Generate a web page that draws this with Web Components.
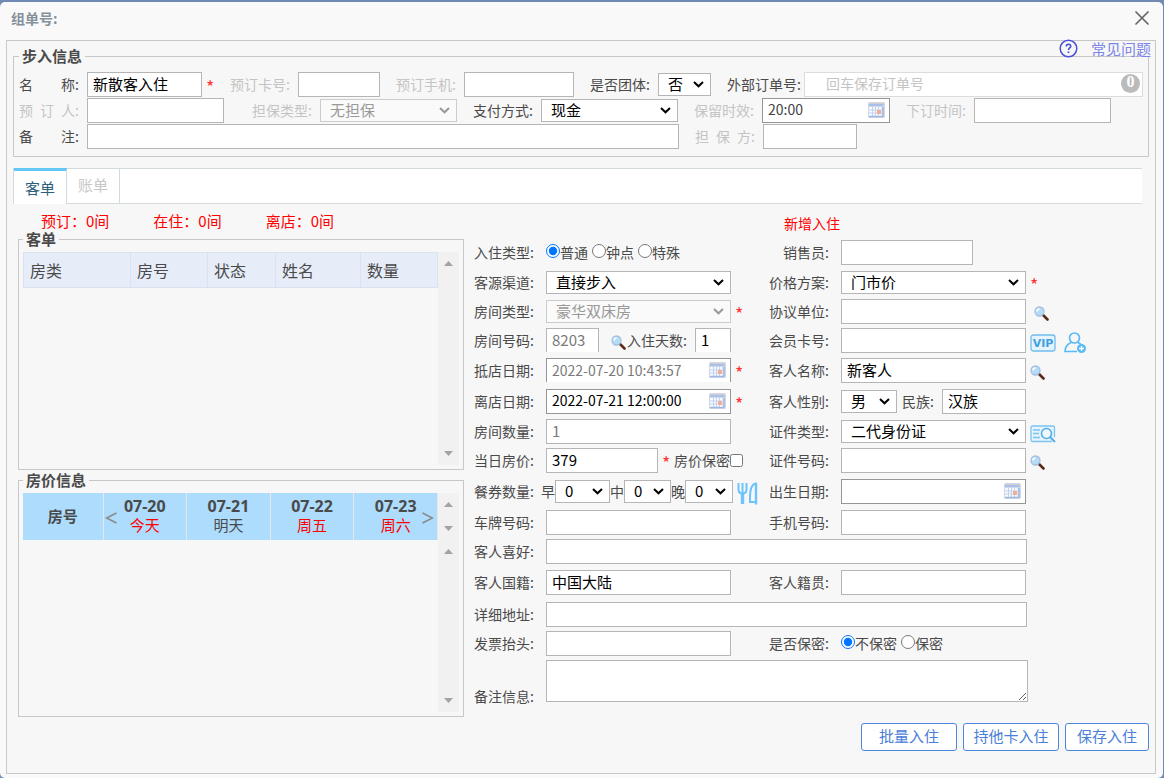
<!DOCTYPE html>
<html lang="zh-CN">
<head>
<meta charset="UTF-8">
<meta name="viewport" content="width=device-width, initial-scale=1.0">
<title>组单号</title>
<style>
    * {
        box-sizing: border-box;
    }

    body {
        margin: 0;
        padding: 2px 1px 0 0;
        min-height: 100vh;
        display: flex;
        background: #7189b5;
        color: #4a4a4a;
        font: 14px/20px "Noto Sans CJK SC", sans-serif;
    }

    checkin-dialog {
        flex: 1;
    }

    .row {
        display: flex;
        align-items: center;
        gap: 16px;
        height: 26px;
    }

    .row > .first {
        margin-right: 12px;
    }

    .grow {
        flex: 1;
    }

    .main {
        display: grid;
        grid-template-columns: 446px 1fr;
        column-gap: 10px;
        padding-left: 5px;
    }

    .status {
        display: flex;
        gap: 44px;
        margin: 9px 0 0 23px;
        font-size: 15px;
        line-height: 16px;
        color: #f00;
    }

    .split {
        display: flex;
    }

    .orders {
        height: 213px;
    }

    .form {
        display: grid;
        grid-template-columns: 295px 1fr;
        grid-template-rows: 33px 30px 30px 28px 30px 30px 32px 28px 30px 32px 30px 28px 34px 30px 28px 48px;
        align-items: center;
        --label-width: 72px;
        --label-gap: 12px;
    }

    .form .title {
        grid-column: 2;
        padding: 5px 0 0 15px;
        color: #f00;
    }

    .cell {
        display: flex;
        align-items: center;
        gap: 4px;
    }

    .roomy {
        gap: 8px;
    }

    .tight {
        gap: 0;
        --label-width: 14px;
        --label-gap: 0px;
    }

    .wide {
        grid-column: 1 / 3;
    }

    .actions {
        display: flex;
        justify-content: flex-end;
        gap: 6px;
        margin-top: 6px;
    }
</style>
</head>
<body>

<checkin-dialog heading="组单号:">
    <group-box heading="步入信息" class="walkin">
        <div class="row">
            <form-field class="first" spread label="名 称" width="115" value="新散客入住" required></form-field>
            <form-field label="预订卡号" width="82" muted></form-field>
            <form-field label="预订手机" width="110" muted></form-field>
            <form-field label="是否团体" type="select" width="53" value="否"></form-field>
            <form-field class="grow" label="外部订单号" width="auto" placeholder="回车保存订单号" badge="0"></form-field>
        </div>
        <div class="row">
            <form-field class="first" spread label="预 订 人" width="137" muted></form-field>
            <form-field label="担保类型" type="select" width="137" value="无担保" muted disabled></form-field>
            <form-field label="支付方式" type="select" width="137" value="现金"></form-field>
            <form-field label="保留时效" type="date" width="128" value="20:00" muted></form-field>
            <form-field label="下订时间" width="137" muted></form-field>
        </div>
        <div class="row">
            <form-field spread label="备 注" width="592"></form-field>
            <form-field spread label="担 保 方" width="94" muted></form-field>
        </div>
    </group-box>

    <tab-strip tabs="客单,账单"></tab-strip>

    <div class="main">
        <div class="left">
            <div class="status">
                <span>预订：0间</span>
                <span>在住：0间</span>
                <span>离店：0间</span>
            </div>
            <group-box heading="客单" class="box">
                <div class="split orders">
                    <order-table class="grow"></order-table>
                    <scroll-rail height="213"></scroll-rail>
                </div>
            </group-box>
            <group-box heading="房价信息" class="box">
                <div class="split">
                    <price-calendar class="grow"></price-calendar>
                    <div>
                        <scroll-rail height="47"></scroll-rail>
                        <scroll-rail height="172"></scroll-rail>
                    </div>
                </div>
            </group-box>
        </div>

        <div class="form">
            <div class="title">新增入住</div>

            <radio-field label="入住类型" name="type" options="普通,钟点,特殊"></radio-field>
            <form-field label="销售员" width="132"></form-field>

            <form-field label="客源渠道" type="select" width="185" value="直接步入"></form-field>
            <form-field label="价格方案" type="select" width="185" value="门市价" required></form-field>

            <form-field label="房间类型" type="select" width="185" value="豪华双床房" disabled required></form-field>
            <div class="cell roomy">
                <form-field label="协议单位" width="185"></form-field>
                <icon-button name="search" title="查找协议单位"></icon-button>
            </div>

            <div class="cell" style="gap: 0">
                <form-field label="房间号码" width="53" value="8203" readonly cut></form-field>
                <icon-button name="search" title="查找房间" style="margin-left: 12px"></icon-button>
                <form-field label="入住天数" width="36" value="1" cut style="--label-width: 69px; --label-gap: 8px"></form-field>
            </div>
            <div class="cell">
                <form-field label="会员卡号" width="185"></form-field>
                <icon-button name="vip" title="会员"></icon-button>
                <icon-button name="member" title="新增会员" style="margin-left: 4px"></icon-button>
            </div>

            <form-field label="抵店日期" type="date" width="185" value="2022-07-20 10:43:57" readonly cut required></form-field>
            <div class="cell">
                <form-field label="客人名称" width="185" value="新客人"></form-field>
                <icon-button name="search" title="查找客人"></icon-button>
            </div>

            <form-field label="离店日期" type="date" width="185" value="2022-07-21 12:00:00" required></form-field>
            <div class="cell">
                <form-field label="客人性别" type="select" width="56" value="男"></form-field>
                <form-field label="民族" width="84" value="汉族" style="--label-width: 41px; --label-gap: 8px"></form-field>
            </div>

            <form-field label="房间数量" width="185" value="1" readonly></form-field>
            <div class="cell">
                <form-field label="证件类型" type="select" width="185" value="二代身份证"></form-field>
                <icon-button name="card" title="读取证件"></icon-button>
            </div>

            <div class="cell">
                <form-field label="当日房价" width="112" value="379" required></form-field>
                <check-field label="房价保密"></check-field>
            </div>
            <div class="cell">
                <form-field label="证件号码" width="185"></form-field>
                <icon-button name="search" title="查找证件"></icon-button>
            </div>

            <div class="cell tight">
                <form-field label="餐券数量" type="none" style="--label-width: 67px; --label-gap: 7px"></form-field>
                <form-field label="早" bare type="select" width="55" value="0"></form-field>
                <form-field label="中" bare type="select" width="47" value="0"></form-field>
                <form-field label="晚" bare type="select" width="48" value="0"></form-field>
                <icon-button name="meal" title="餐券" style="margin-left: 4px"></icon-button>
            </div>
            <form-field label="出生日期" type="date" width="185"></form-field>

            <form-field label="车牌号码" width="185"></form-field>
            <form-field label="手机号码" width="185"></form-field>

            <form-field class="wide" label="客人喜好" width="481"></form-field>

            <form-field label="客人国籍" width="185" value="中国大陆"></form-field>
            <form-field label="客人籍贯" width="185"></form-field>

            <form-field class="wide" label="详细地址" width="481"></form-field>

            <form-field label="发票抬头" width="185"></form-field>
            <radio-field label="是否保密" name="secret" options="不保密,保密"></radio-field>

            <form-field class="wide" label="备注信息" type="area" width="482"></form-field>
        </div>
    </div>

    <div class="actions">
        <action-button width="96">批量入住</action-button>
        <action-button width="96">持他卡入住</action-button>
        <action-button width="84">保存入住</action-button>
    </div>
</checkin-dialog>

<script>
const BASE = `
    * {
        box-sizing: border-box;
    }
    button, input, select, textarea {
        font-family: inherit;
        margin: 0;
    }
    button {
        padding: 0;
        border: none;
        background: none;
        cursor: pointer;
    }
`;

const CALENDAR = `
    <svg width="17" height="16" viewBox="0 0 17 16">
        <rect width="17" height="16" rx="1.500" fill="#cfd8ea"/>
        <path d="M1 1.500h14.500" stroke="#d9cdc8"/>
        <path d="M1 3h14.500" stroke="#a9c0ea" stroke-width="2"/>
        <path d="M1 5h12.500v9H1z" fill="#f6f9fe"/>
        <path d="M1 8h12.500M1 11h12.500M4.500 5v9M7.500 5v9M10.500 5v9" stroke="#c3d3ee"/>
        <path d="M9 8h4v4H9z" fill="#f4ad94"/>
        <path d="M15 5v9.500M1 14.500h14" stroke="#a3b8de" stroke-width="1.500"/>
    </svg>`;

const CHEVRON = `
    <svg class="chevron" width="11" height="7" viewBox="0 0 11 7">
        <path d="M1 1l4.500 4.300L10 1" fill="none" stroke="currentColor" stroke-width="2"/>
    </svg>`;

const ICONS = {
    search: `
        <svg width="15" height="15" viewBox="0 0 15 15">
            <path d="M9 9l4.500 4.500" stroke="#5b2a1c" stroke-width="2.600" stroke-linecap="round"/>
            <circle cx="5.500" cy="5.500" r="4.500" fill="#b5dbf7" stroke="#a3bfe0" stroke-width="1.300"/>
            <path d="M3 5.500a2.600 2.600 0 0 1 2.500-2.500" fill="none" stroke="#fff" stroke-width="1.500"/>
        </svg>`,
    vip: `
        <svg width="26" height="18" viewBox="0 0 26 18">
            <rect x="1" y="1" width="24" height="16" rx="2.500" fill="#e4f3fd" stroke="#6fbdee" stroke-width="1.300"/>
            <text x="13" y="13" text-anchor="middle" font-family="DejaVu Sans" font-weight="700" font-size="11" fill="#3f9fde">VIP</text>
        </svg>`,
    member: `
        <svg width="23" height="22" viewBox="0 0 23 22" fill="none" stroke="#59baf5" stroke-width="1.700">
            <circle cx="10.500" cy="6" r="5"/>
            <path d="M7 10.500C3 12.500 1 15 1 19.500h12M14 10.500c2 1 3 1.800 3.800 3"/>
            <circle cx="17.500" cy="16.500" r="4.500" fill="#59baf5" stroke="none"/>
            <path d="M17.500 14v5M15 16.500h5" stroke="#fff" stroke-width="1.300"/>
        </svg>`,
    card: `
        <svg width="26" height="18" viewBox="0 0 26 18" fill="none" stroke="#7cc3ee" stroke-width="1.300">
            <path d="M24.500 12V2.500Q24.500 1 23 1H2.500Q1 1 1 2.500v12Q1 16.500 2.500 16.500H22" fill="#e4f3fd"/>
            <path d="M3 5h7M3 8.500h6M3 12.500h7"/>
            <circle cx="16.500" cy="8.500" r="5" fill="#eef8ff" stroke="#56aee4" stroke-width="1.600"/>
            <path d="M20 12l5 5" stroke="#56aee4" stroke-width="2"/>
        </svg>`,
    meal: `
        <svg width="21" height="23" viewBox="0 0 21 23" fill="none" stroke="#6cc4fa" stroke-width="2">
            <path d="M1.500 1v6.500q0 4 4 4t4-4V1M5.500 1v21"/>
            <path d="M5.500 11v11" stroke-width="3.400"/>
            <path d="M19 22V1.500C14.500 2 13 8 13 15.500V20h5.500"/>
            <path d="M19 2v20.500" stroke-width="2.400"/>
        </svg>`
};

class CheckinDialog extends HTMLElement {

    constructor() {
        super();
        this.attachShadow({ mode: 'open' });
    }

    connectedCallback() {
        this.shadowRoot.innerHTML = `
            <style>
                ${BASE}
                :host {
                    display: flex;
                    flex-direction: column;
                    padding: 0 7px 4px 6px;
                    border-radius: 5px;
                    background: #f9f9f9;
                }
                header {
                    display: flex;
                    align-items: center;
                    justify-content: space-between;
                    height: 32px;
                    padding: 0 7px 0 5px;
                    margin-bottom: 6px;
                }
                h1 {
                    margin: 0;
                    font-size: 14px;
                    font-weight: 700;
                    color: #84909a;
                }
                header svg {
                    display: block;
                }
                .panel {
                    position: relative;
                    flex: 1;
                    padding: 5px 6px 21px;
                    border: 1px solid #c8c8c8;
                    background: #f7f7f7;
                }
                /* sits over the top edge of the first group box */
                a {
                    position: absolute;
                    top: -2px;
                    right: 4px;
                    display: flex;
                    align-items: center;
                    gap: 13px;
                    font-size: 15px;
                    line-height: 18px;
                    color: #7b86e8;
                    text-decoration: none;
                }
            </style>
            <header>
                <h1>${this.getAttribute('heading')}</h1>
                <button aria-label="关闭">
                    <svg width="14" height="14" viewBox="0 0 14 14"><path d="M1 1l12 12M13 1L1 13" stroke="#666" stroke-width="1.700" stroke-linecap="round"/></svg>
                </button>
            </header>
            <div class="panel">
                <a href="#help">
                    <svg width="19" height="19" viewBox="0 0 19 19" fill="none" stroke="#4a4fd8">
                        <circle cx="9.500" cy="9.500" r="8.300" stroke-width="1.500"/>
                        <path d="M7.300 7.600q0-2.300 2.200-2.300t2.200 2q0 1-1.100 1.700t-1.100 2" stroke-width="1.600"/>
                        <path d="M9.500 12.400v1.700" stroke-width="1.700"/>
                    </svg>
                    常见问题
                </a>
                <slot></slot>
            </div>
        `;
    }
}

class GroupBox extends HTMLElement {

    constructor() {
        super();
        this.attachShadow({ mode: 'open' });
    }

    connectedCallback() {
        this.shadowRoot.innerHTML = `
            <style>
                ${BASE}
                :host {
                    display: block;
                    --label-width: 68px;
                    --label-gap: 8px;
                }
                fieldset {
                    min-width: 0;
                    margin: 0;
                    padding: 5px 5px 7px;
                    border: 1px solid #c8c8c8;
                }
                :host(.box) fieldset {
                    padding: 3px 4px 4px;
                }
                legend {
                    padding: 0 3px;
                    font-size: 15px;
                    font-weight: 700;
                    line-height: 20px;
                }
            </style>
            <fieldset>
                <legend>${this.getAttribute('heading')}</legend>
                <slot></slot>
            </fieldset>
        `;
    }
}

class TabStrip extends HTMLElement {

    constructor() {
        super();
        this.attachShadow({ mode: 'open' });
    }

    connectedCallback() {
        const tabs = this.getAttribute('tabs').split(',');
        this.shadowRoot.innerHTML = `
            <style>
                ${BASE}
                :host {
                    display: flex;
                    height: 36px;
                    margin: 11px 7px 0 0;
                    border: 1px solid #d3dadd;
                    border-right: none;
                    background: #fff;
                }
                button {
                    width: 53px;
                    padding-bottom: 3px;
                    border-right: 1px solid #d3dadd;
                    font-size: 15px;
                    color: #c8c8c8;
                }
                button.active {
                    margin: -1px 0;
                    padding-bottom: 0;
                    border-top: 3px solid #62c7f3;
                    background: #fff;
                    color: #2b5f7c;
                }
            </style>
            ${tabs.map((tab, i) => `<button class="${i === 0 ? 'active' : ''}">${tab}</button>`).join('')}
        `;
        this.shadowRoot.addEventListener('click', (e) => {
            if (e.target.tagName !== 'BUTTON') return;
            this.shadowRoot.querySelector('.active').classList.remove('active');
            e.target.classList.add('active');
        });
    }
}

const FIELD = `
    ${BASE}
    :host {
        display: flex;
        align-items: center;
    }
    .label {
        flex: none;
        width: var(--label-width);
        padding-right: var(--label-gap);
        text-align: right;
        white-space: nowrap;
    }
    :host([muted]) .label {
        color: #c4c4c4;
    }
`;

class FormField extends HTMLElement {

    constructor() {
        super();
        this.attachShadow({ mode: 'open' });
    }

    control() {
        const value = this.getAttribute('value') || '';
        const readonly = this.hasAttribute('readonly') ? 'readonly' : '';
        const disabled = this.hasAttribute('disabled') ? 'disabled' : '';
        switch (this.getAttribute('type')) {
            case 'none':
                return '';
            case 'select':
                return `<select id="control" ${disabled}><option>${value}</option></select>${CHEVRON}`;
            case 'area':
                return '<textarea id="control"></textarea>';
            case 'date':
                return `<input id="control" class="date" value="${value}" ${readonly}>
                    <button class="pick" aria-label="选择日期">${CALENDAR}</button>`;
            default:
                return `<input id="control" value="${value}" placeholder="${this.getAttribute('placeholder') || ''}" ${readonly}>`;
        }
    }

    connectedCallback() {
        const width = this.getAttribute('width') || '0';
        const label = this.getAttribute('label');
        const badge = this.getAttribute('badge');
        const colon = this.hasAttribute('bare') ? '' : ':';
        this.shadowRoot.innerHTML = `
            <style>
                ${FIELD}
                :host([spread]) .label {
                    display: flex;
                }
                :host([spread]) .label span {
                    flex: 1;
                    text-align-last: justify;
                }
                :host([badge]) .label {
                    width: 77px;
                    padding-right: 4px;
                }
                :host([type="area"]) {
                    align-items: flex-end;
                }
                :host([type="area"]) .label {
                    line-height: 12px;
                }
                .wrap {
                    position: relative;
                    display: flex;
                    ${width === 'auto' ? 'flex: 1;' : `width: ${width}px;`}
                }
                input,
                select,
                textarea {
                    width: 100%;
                    min-width: 0;
                    height: 25px;
                    border: 1px solid #b5b5b5;
                    border-radius: 0;
                    background: #fff;
                    color: #000;
                    font-size: 15px;
                    outline: none;
                }
                input {
                    padding: 0 5px 2px;
                }
                input.date {
                    border-color: #969696;
                    font-size: 14px;
                }
                :host([muted]) input.date {
                    color: #444;
                }
                input:read-only {
                    color: #7a7a7a;
                }
                :host([cut]) input {
                    height: 24px;
                    border-bottom: none;
                }
                :host([badge]) input {
                    padding-left: 21px;
                    border-color: #dcdcdc;
                    font-size: 14px;
                }
                input::placeholder {
                    color: #c4c4c4;
                }
                select {
                    appearance: none;
                    height: 23px;
                    padding: 0 0 2px 9px;
                    line-height: 19px;
                }
                .chevron {
                    position: absolute;
                    top: 8px;
                    right: 7px;
                    color: #000;
                    pointer-events: none;
                }
                select:disabled {
                    border-color: #ccc;
                    background: #fafafa;
                    color: #999;
                    opacity: 1;
                }
                :host([disabled]) .chevron {
                    color: #999;
                }
                textarea {
                    height: 42px;
                }
                .pick {
                    position: absolute;
                    top: 4px;
                    right: 5px;
                    line-height: 0;
                }
                .badge {
                    position: absolute;
                    top: 2px;
                    right: 3px;
                    width: 19px;
                    height: 19px;
                    border-radius: 50%;
                    background: #bbb;
                    color: #fff;
                    font: bold 16px/15px "Liberation Serif", serif;
                    text-align: center;
                }
                .star {
                    width: 8px;
                    margin: 0 -12px 0 4px;
                    padding-top: 4px;
                    font-size: 18px;
                    line-height: 16px;
                    color: #f33;
                }
            </style>
            <label class="label" for="control"><span>${label}</span>${colon}</label>
            <div class="wrap">
                ${this.control()}
                ${badge ? `<span class="badge">${badge}</span>` : ''}
            </div>
            ${this.hasAttribute('required') ? '<span class="star">*</span>' : ''}
        `;
    }
}

class RadioField extends HTMLElement {

    constructor() {
        super();
        this.attachShadow({ mode: 'open' });
    }

    connectedCallback() {
        const name = this.getAttribute('name');
        const options = this.getAttribute('options').split(',');
        this.shadowRoot.innerHTML = `
            <style>
                ${FIELD}
                .option {
                    display: flex;
                    align-items: center;
                    margin-right: 4px;
                }
                input {
                    width: 14px;
                    height: 14px;
                    margin-bottom: 3px;
                }
            </style>
            <span class="label">${this.getAttribute('label')}:</span>
            ${options.map((option, i) => `
                <label class="option"><input type="radio" name="${name}" ${i === 0 ? 'checked' : ''}>${option}</label>
            `).join('')}
        `;
    }
}

class CheckField extends HTMLElement {

    constructor() {
        super();
        this.attachShadow({ mode: 'open' });
        this.shadowRoot.innerHTML = `
            <style>
                ${BASE}
                :host {
                    display: block;
                    margin-left: 12px;
                }
                label {
                    display: flex;
                    align-items: center;
                }
            </style>
            <label>${this.getAttribute('label')}<input type="checkbox"></label>
        `;
    }
}

class IconButton extends HTMLElement {

    constructor() {
        super();
        this.attachShadow({ mode: 'open' });
        this.shadowRoot.innerHTML = `
            <style>
                ${BASE}
                :host {
                    display: block;
                    padding-top: 5px;
                    line-height: 0;
                }
                svg {
                    display: block;
                }
            </style>
            <button aria-label="${this.title}">${ICONS[this.getAttribute('name')]}</button>
        `;
    }
}

class ActionButton extends HTMLElement {

    constructor() {
        super();
        this.attachShadow({ mode: 'open' });
        this.shadowRoot.innerHTML = `
            <style>
                ${BASE}
                :host {
                    display: block;
                }
                button {
                    width: ${this.getAttribute('width')}px;
                    height: 28px;
                    padding-bottom: 3px;
                    border: 1px solid #4a88de;
                    border-radius: 3px;
                    background: #fff;
                    color: #4a80d8;
                    font-size: 15px;
                }
            </style>
            <button><slot></slot></button>
        `;
    }
}

class ScrollRail extends HTMLElement {

    constructor() {
        super();
        this.attachShadow({ mode: 'open' });
        this.shadowRoot.innerHTML = `
            <style>
                ${BASE}
                :host {
                    display: flex;
                    flex-direction: column;
                    align-items: center;
                    justify-content: space-between;
                    width: 21px;
                    height: ${this.getAttribute('height')}px;
                    padding: 9px 0;
                    background: #f1f1f1;
                }
                button {
                    line-height: 0;
                }
            </style>
            <button aria-label="向上"><svg width="9" height="5" viewBox="0 0 9 5"><path d="M0 5L4.500 0L9 5z" fill="#a3a3a3"/></svg></button>
            <button aria-label="向下"><svg width="9" height="5" viewBox="0 0 9 5"><path d="M0 0L4.500 5L9 0z" fill="#a3a3a3"/></svg></button>
        `;
    }
}

class OrderTable extends HTMLElement {

    constructor() {
        super();
        this.attachShadow({ mode: 'open' });
        this.shadowRoot.innerHTML = `
            <style>
                ${BASE}
                :host {
                    display: block;
                }
                table {
                    width: 100%;
                    table-layout: fixed;
                    border-collapse: collapse;
                }
                th {
                    height: 35px;
                    padding: 0 0 0 6px;
                    border: 1px solid #dbe1f0;
                    background: #e6edf9;
                    font-size: 16px;
                    font-weight: 400;
                    text-align: left;
                }
            </style>
            <table>
                <colgroup><col style="width: 107px"><col style="width: 77px"><col style="width: 68px"><col style="width: 85px"><col></colgroup>
                <thead>
                    <tr><th>房类</th><th>房号</th><th>状态</th><th>姓名</th><th>数量</th></tr>
                </thead>
            </table>
        `;
    }
}

class PriceCalendar extends HTMLElement {

    constructor() {
        super();
        this.attachShadow({ mode: 'open' });
        const days = [
            ['07-20', '今天', true],
            ['07-21', '明天', false],
            ['07-22', '周五', true],
            ['07-23', '周六', true]
        ];
        this.shadowRoot.innerHTML = `
            <style>
                ${BASE}
                :host {
                    position: relative;
                    display: block;
                }
                table {
                    width: 100%;
                    table-layout: fixed;
                    border-collapse: collapse;
                }
                th {
                    height: 47px;
                    padding: 0 0 2px;
                    border-right: 1px solid #e6e6e6;
                    background: #addcfd;
                    font-size: 15px;
                    font-weight: 700;
                    line-height: 20px;
                }
                th:first-child {
                    width: 80px;
                }
                b {
                    display: block;
                    font: bold 16px/18px "Noto Sans", sans-serif;
                }
                span {
                    font-weight: 400;
                }
                .hot {
                    color: #f00;
                }
                /* paging arrows float over the day cells */
                button {
                    position: absolute;
                    top: 15px;
                    height: 20px;
                    line-height: 0;
                }
                .prev {
                    left: 82px;
                }
                .next {
                    right: 4px;
                }
            </style>
            <table>
                <thead>
                    <tr>
                        <th>房号</th>
                        ${days.map(([date, name, hot]) => `<th><b>${date}</b><span class="${hot ? 'hot' : ''}">${name}</span></th>`).join('')}
                    </tr>
                </thead>
            </table>
            <button class="prev" aria-label="前一天"><svg width="12" height="12" viewBox="0 0 12 12"><path d="M11.500 1L1.500 6l10 5" fill="none" stroke="#888" stroke-width="1.500"/></svg></button>
            <button class="next" aria-label="后一天"><svg width="12" height="12" viewBox="0 0 12 12"><path d="M.5 1l10 5L.5 11" fill="none" stroke="#888" stroke-width="1.500"/></svg></button>
        `;
    }
}

customElements.define('checkin-dialog', CheckinDialog);
customElements.define('group-box', GroupBox);
customElements.define('tab-strip', TabStrip);
customElements.define('form-field', FormField);
customElements.define('radio-field', RadioField);
customElements.define('check-field', CheckField);
customElements.define('icon-button', IconButton);
customElements.define('action-button', ActionButton);
customElements.define('scroll-rail', ScrollRail);
customElements.define('order-table', OrderTable);
customElements.define('price-calendar', PriceCalendar);
</script>
</body>
</html>
